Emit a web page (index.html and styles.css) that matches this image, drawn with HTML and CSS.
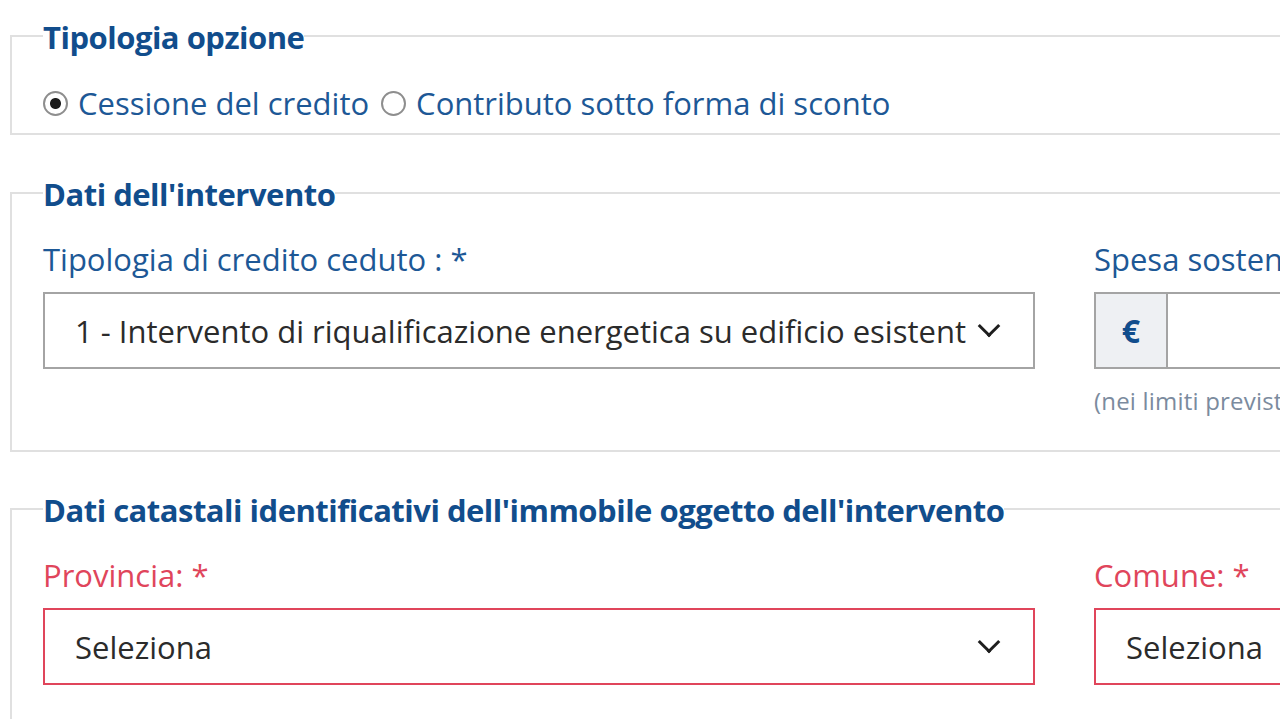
FILE: index.html
```
<!DOCTYPE html>
<html lang="it">
<head>
    <meta charset="utf-8" />
    <title>Comunicazione opzione</title>
    <link rel="stylesheet" href="styles.css">
</head>
<body>
    <div class="page">
        <!-- tipologia opzione -->
        <fieldset class="box box-opzione">
            <legend>Tipologia opzione</legend>
            <div class="radios">
                <label class="radio"><input type="radio" name="opzione" checked> Cessione del credito</label>
                <label class="radio"><input type="radio" name="opzione"> Contributo sotto forma di sconto</label>
            </div>
        </fieldset>

        <!-- dati intervento -->
        <fieldset class="box box-intervento">
            <legend>Dati dell'intervento</legend>
            <div class="row">
                <div class="field">
                    <label class="lbl">Tipologia di credito ceduto : *</label>
                    <div class="select">
                        <span class="select-text">1 - Intervento di riqualificazione energetica su edificio esistent</span>
                        <span class="chevron"></span>
                    </div>
                </div>
                <div class="field">
                    <label class="lbl">Spesa sostenuta per l'intervento : *</label>
                    <div class="input-group">
                        <span class="addon">€</span>
                        <span class="input"></span>
                    </div>
                    <p class="help">(nei limiti previsti dalla normativa)</p>
                </div>
            </div>
        </fieldset>

        <!-- dati catastali -->
        <fieldset class="box box-catasto">
            <legend>Dati catastali identificativi dell'immobile oggetto dell'intervento</legend>
            <div class="row">
                <div class="field has-error">
                    <label class="lbl">Provincia: *</label>
                    <div class="select">
                        <span class="select-text">Seleziona</span>
                        <span class="chevron"></span>
                    </div>
                </div>
                <div class="field has-error">
                    <label class="lbl">Comune: *</label>
                    <div class="select">
                        <span class="select-text">Seleziona</span>
                        <span class="chevron"></span>
                    </div>
                </div>
            </div>
        </fieldset>
    </div>
</body>
</html>
```

FILE: styles.css
```
html, body {
    margin: 0;
    padding: 0;
    background: #fff;
    overflow: hidden;
}

body {
    font-family: "Open Sans", "Noto Sans", sans-serif;
    font-size: 31px;
    color: #1d5896;
}

.page {
    padding: 17px 0 0 10px;
    width: 2200px;
}

.box {
    border: 2px solid #e0e0e0;
    margin: 0;
    padding: 0 0 0 31px;
}

    .box legend {
        padding: 3px 0 0;
        font-size: 31px;
        font-weight: 700;
        line-height: 34px;
        color: #114d8c;
        letter-spacing: -0.5px;
    }

.box-opzione {
    padding-bottom: 10px;
}

.box-intervento {
    margin-top: 39px;
    padding-bottom: 34px;
}

.box-catasto {
    margin-top: 38px;
    padding-bottom: 40px;
}

.radios {
    display: flex;
    gap: 12px;
    margin-top: 29px;
}

.radio {
    display: flex;
    align-items: center;
    gap: 10px;
    line-height: 40px;
}

    .radio input {
        -webkit-appearance: none;
        appearance: none;
        margin: 0;
        width: 25px;
        height: 25px;
        border: 2px solid #8e8e8e;
        border-radius: 50%;
        background: #fff;
    }

        .radio input:checked {
            background: radial-gradient(circle, #1c1c1c 0 5px, #fff 6px);
        }

.row {
    display: grid;
    grid-template-columns: 992px 992px;
    column-gap: 59px;
    margin-top: 30px;
}

.lbl {
    display: block;
    line-height: 36px;
    margin-bottom: 15px;
}

.select {
    height: 77px;
    box-sizing: border-box;
    border: 2px solid #a4a4a4;
    display: flex;
    align-items: center;
    padding: 0 34px 0 30px;
    color: #2b2b2b;
}

.select-text {
    flex: 1;
    white-space: nowrap;
    overflow: hidden;
}

.chevron {
    width: 13px;
    height: 13px;
    border-right: 3px solid #1e1e1e;
    border-bottom: 3px solid #1e1e1e;
    transform: rotate(45deg);
    margin: -9px 2px 0 10px;
}

.input-group {
    display: flex;
    height: 77px;
    box-sizing: border-box;
    border: 2px solid #a4a4a4;
}

.addon {
    width: 70px;
    background: #eef0f3;
    border-right: 2px solid #a4a4a4;
    display: flex;
    align-items: center;
    justify-content: center;
    font-size: 32px;
    font-weight: 700;
    color: #114d8c;
}

.input {
    flex: 1;
    background: #fff;
}

.help {
    margin: 17px 0 0;
    font-size: 24px;
    line-height: 30px;
    letter-spacing: 0.2px;
    color: #7b8b9e;
    white-space: nowrap;
}

.has-error .lbl {
    color: #e0455b;
}

.has-error .select {
    border-color: #e0455b;
}
```
